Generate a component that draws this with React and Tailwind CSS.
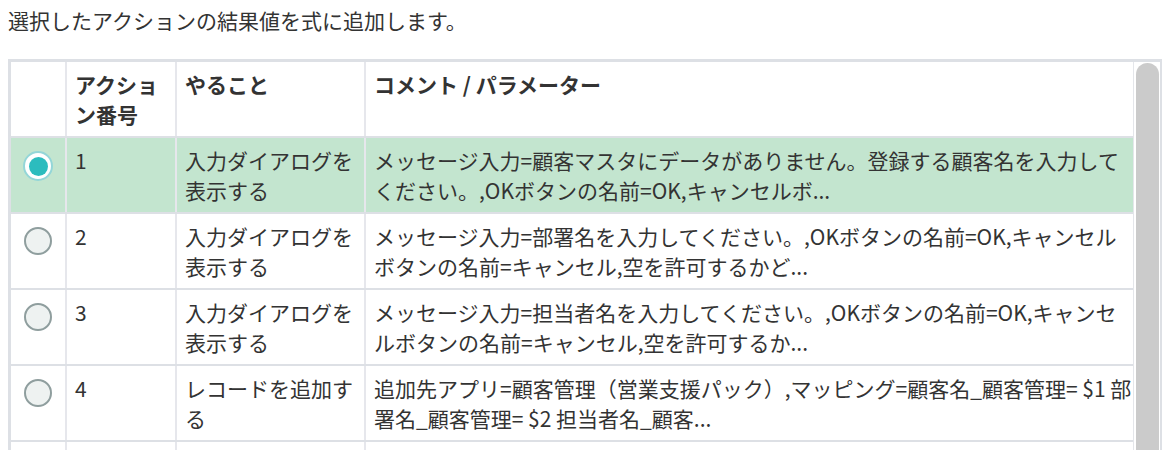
import React from "react";

const rows = [
  {
    n: "1",
    what: "入力ダイアログを表示する",
    comment:
      "メッセージ入力=顧客マスタにデータがありません。登録する顧客名を入力してください。,OKボタンの名前=OK,キャンセルボ...",
    selected: true,
  },
  {
    n: "2",
    what: "入力ダイアログを表示する",
    comment:
      "メッセージ入力=部署名を入力してください。,OKボタンの名前=OK,キャンセルボタンの名前=キャンセル,空を許可するかど...",
  },
  {
    n: "3",
    what: "入力ダイアログを表示する",
    comment:
      "メッセージ入力=担当者名を入力してください。,OKボタンの名前=OK,キャンセルボタンの名前=キャンセル,空を許可するか...",
  },
  {
    n: "4",
    what: "レコードを追加する",
    comment:
      "追加先アプリ=顧客管理（営業支援パック）,マッピング=顧客名_顧客管理= $1 部署名_顧客管理= $2 担当者名_顧客...",
  },
];

function Radio({ checked }) {
  if (checked) {
    return (
      <div className="w-[30px] h-[30px] rounded-full border-2 border-[#94d6d8] bg-white flex items-center justify-center">
        <div className="w-[19px] h-[19px] rounded-full bg-[#2cbcbe]" />
      </div>
    );
  }
  return (
    <div className="w-[28px] h-[28px] rounded-full border-2 border-[#8f9e9e] bg-[#eef2f1]" />
  );
}

export default function App() {
  return (
    <div className="h-[450px] overflow-hidden bg-white text-[#333] font-['Noto_Sans_CJK_JP','Noto_Sans',sans-serif] text-[21px] leading-[30px]">
      <p className="px-2 pt-[5px]">選択したアクションの結果値を式に追加します。</p>
      <div className="mt-[24px] mx-2 flex border-[3px] border-r-2 border-b-0 border-[#dde0e5]">
        <div className="flex-1 border-r border-[#e4e6ea]">
          <div className="flex border-b-2 border-[#dde0e5] font-bold">
            <div className="w-[56px] shrink-0 border-r-2 border-[#e6e7ec]" />
            <div className="w-[110px] shrink-0 border-r-2 border-[#e6e7ec] px-2 py-[7px]">
              アクション番号
            </div>
            <div className="w-[189px] shrink-0 border-r-2 border-[#e6e7ec] px-2 py-[7px]">
              やること
            </div>
            <div className="flex-1 px-2 py-[7px]">コメント / パラメーター</div>
          </div>
          {rows.map((r) => (
            <div
              key={r.n}
              className={
                "flex border-b-2 border-[#dde0e5] " +
                (r.selected ? "bg-[#c3e5cf]" : "bg-white")
              }
            >
              <div className="w-[56px] shrink-0 border-r-2 border-[#e6e7ec] flex justify-center pt-[13px]">
                <Radio checked={r.selected} />
              </div>
              <div className="w-[110px] shrink-0 border-r-2 border-[#e6e7ec] px-2 py-[7px]">
                {r.n}
              </div>
              <div className="w-[189px] shrink-0 border-r-2 border-[#e6e7ec] px-2 py-[7px]">
                {r.what}
              </div>
              <div className="flex-1 min-w-0 pl-2 pr-[1px] py-[7px]">{r.comment}</div>
            </div>
          ))}
          <div className="flex h-[74px]">
            <div className="w-[56px] shrink-0 border-r-2 border-[#e6e7ec]" />
            <div className="w-[110px] shrink-0 border-r-2 border-[#e6e7ec]" />
            <div className="w-[189px] shrink-0 border-r-2 border-[#e6e7ec]" />
            <div className="flex-1" />
          </div>
        </div>
        <div className="w-[26px] shrink-0 pl-[2px] pr-[1px] pt-px">
          <div className="h-[420px] rounded-t-full bg-[#cbcbcb]" />
        </div>
      </div>
    </div>
  );
}
